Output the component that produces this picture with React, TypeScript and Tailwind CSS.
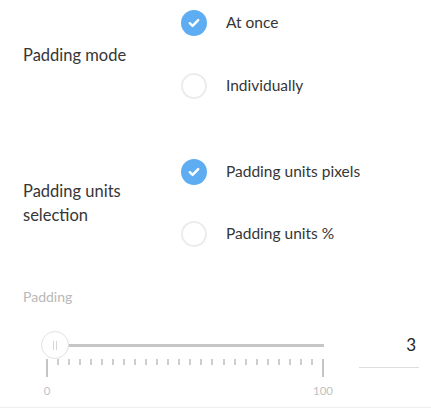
import { useState } from 'react';

type Option = { id: string; label: string };

function Radio({ checked }: { checked: boolean }) {
  return checked ? (
    <span className="flex h-[26px] w-[26px] shrink-0 items-center justify-center rounded-full bg-[#5eadf2]">
      <svg width="12" height="10" viewBox="0 0 12 10" fill="none">
        <path d="M1.8 5.2 L4.6 7.9 L10.2 2.1" stroke="white" strokeWidth="2.4" strokeLinecap="round" strokeLinejoin="round" />
      </svg>
    </span>
  ) : (
    <span className="h-[26px] w-[26px] shrink-0 rounded-full border-2 border-[#ececec] bg-white" />
  );
}

function RadioGroup({
  title,
  options,
  value,
  onChange,
  gap,
}: {
  title: string;
  options: Option[];
  value: string;
  onChange: (v: string) => void;
  gap: string;
}) {
  return (
    <div className="flex items-center">
      <div className="w-[181px] shrink-0 pl-[23px] pr-10 text-[16.5px] leading-[24px] text-[#363636]">{title}</div>
      <div className={`flex flex-col ${gap}`}>
        {options.map(o => (
          <button key={o.id} onClick={() => onChange(o.id)} className="flex h-[26px] items-center gap-[19px] text-left">
            <Radio checked={value === o.id} />
            <span className="text-[15.5px] text-[#363636]">{o.label}</span>
          </button>
        ))}
      </div>
    </div>
  );
}

export default function App() {
  const [mode, setMode] = useState('once');
  const [units, setUnits] = useState('px');
  const [padding] = useState(3);

  const ticks = Array.from({ length: 26 }, (_, i) => i);

  return (
    <div className="h-[413px] w-[431px] overflow-hidden bg-white font-['Lato',sans-serif]">
      <div className="pt-[10px]">
        <RadioGroup
          title="Padding mode"
          options={[
            { id: 'once', label: 'At once' },
            { id: 'each', label: 'Individually' },
          ]}
          value={mode}
          onChange={setMode}
          gap="gap-[37px]"
        />
      </div>
      <div className="pt-[60px]">
        <RadioGroup
          title="Padding units selection"
          options={[
            { id: 'px', label: 'Padding units pixels' },
            { id: 'pct', label: 'Padding units %' },
          ]}
          value={units}
          onChange={setUnits}
          gap="gap-[36px]"
        />
      </div>

      <div className="pl-[23px] pt-[40px] text-[14px] leading-[19px] text-[#b8b8b8]">Padding</div>

      <div className="mt-[25px] flex border-b border-[#eeeeee] pb-[9px]">
        <div className="ml-[46px] w-[278px] shrink-0">
          <div className="relative h-[28px]">
            <div className="absolute left-0 right-0 top-[13px] h-[3px] bg-[#c6c6c6]" />
            <div
              className="absolute top-0 flex h-[28px] w-[28px] -translate-x-1/2 items-center justify-center gap-[2px] rounded-full border border-[#e2e2e2] bg-white"
              style={{ left: `${(padding / 100) * 276 + 1}px` }}
            >
              <span className="h-[9px] w-px bg-[#d6d6d6]" />
              <span className="h-[9px] w-px bg-[#d6d6d6]" />
            </div>
          </div>
          <div className="flex h-[18px] items-start justify-between">
            {ticks.map(i => (
              <span
                key={i}
                className={
                  i === 0 || i === 25
                    ? 'h-[18px] w-[2px] bg-[#c4c4c4]'
                    : 'h-[6px] w-[2px] bg-[#cdcdcd]'
                }
              />
            ))}
          </div>
          <div className="relative mt-[7px] h-[14px] text-[11.5px] leading-[14px] text-[#c2c2c2]">
            <span className="absolute left-[1px] -translate-x-1/2">0</span>
            <span className="absolute right-[1px] translate-x-1/2">100</span>
          </div>
        </div>
        <div className="ml-[35px] w-[60px]">
          <div className="flex h-[37px] items-center justify-end border-b border-[#dddddd] pb-[8px] pr-[3px] text-[17px] text-[#222]">
            {padding}
          </div>
        </div>
      </div>
    </div>
  );
}
